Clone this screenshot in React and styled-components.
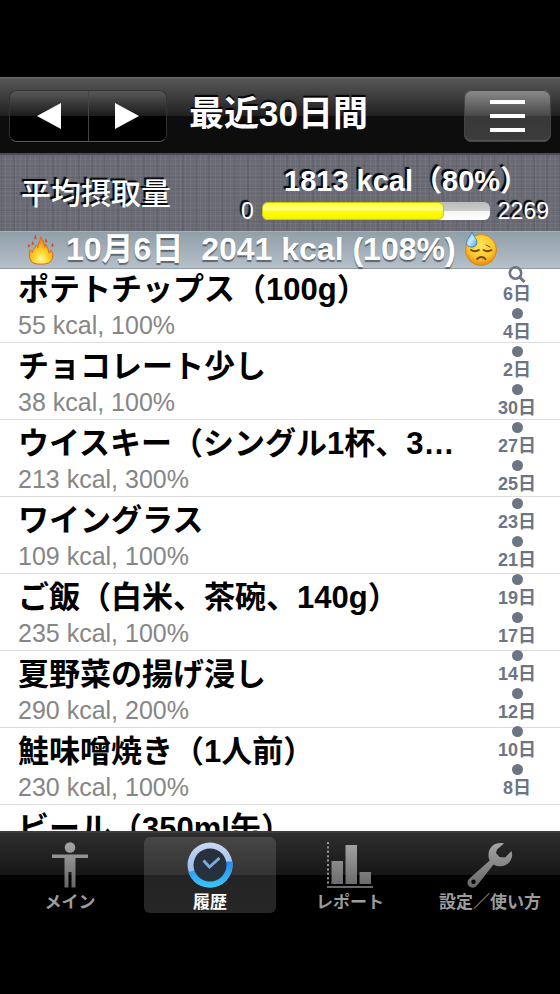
import React, { useState } from "react";
import styled, { createGlobalStyle } from "styled-components";

const GlobalStyle = createGlobalStyle`
  * {
    box-sizing: border-box;
  }

  body {
    margin: 0;
    background: #000;
    font-family: "Liberation Sans", "Noto Sans CJK JP", sans-serif;
  }

  button {
    font-family: inherit;
    padding: 0;
    border: none;
    cursor: pointer;
  }

  svg {
    flex-shrink: 0;
  }
`;

const Screen = styled.div`
  display: flex;
  flex-direction: column;
  height: 100vh;
  padding: 77px 0;
  background: #000;
  overflow: hidden;
`;

const Header = styled.header`
  display: flex;
  align-items: center;
  gap: 22px;
  flex-shrink: 0;
  height: 76px;
  padding: 0 9px;
  border-top: 1px solid #6c6c6c;
  background: linear-gradient(#585858, #212121 50%, #0e0e0e 50%, #0c0c0c);
`;

const Segment = styled.div`
  display: flex;
  width: 158px;
  height: 52px;
  border: 1px solid #333;
  border-bottom-color: #5a5a5a;
  border-radius: 8px;
  overflow: hidden;
`;

const SegmentButton = styled.button`
  display: flex;
  flex: 1;
  align-items: center;
  justify-content: center;
  background: linear-gradient(#585858, #1c1c1c 49%, #000 50%);

  & + & {
    border-left: 1px solid #444;
  }
`;

const Title = styled.h1`
  flex: 1;
  margin: 0;
  padding-bottom: 4px;
  color: #fff;
  font-size: 35px;
  font-weight: 700;
  line-height: 40px;
  text-shadow: 0 -2px 1px #000;
  white-space: nowrap;
`;

const MenuButton = styled.button`
  display: flex;
  flex-direction: column;
  align-items: center;
  justify-content: center;
  gap: 10px;
  width: 87px;
  height: 52px;
  border-radius: 8px;
  box-shadow: inset 0 0 0 1px #444, inset 0 -2px 0 #555;
  background: linear-gradient(#8c8c8c, #484848 50%, #383838 50%, #3c3c3c);
`;

const MenuLine = styled.span`
  width: 35px;
  height: 4px;
  background: #fff;
`;

const Summary = styled.section`
  display: flex;
  align-items: center;
  justify-content: space-between;
  flex-shrink: 0;
  height: 78px;
  padding: 2px 11px 0 21px;
  border-top: 2px solid #4c4d54;
  color: #fff;
  text-shadow: -2px -2px 1px #000;
  background:
    repeating-linear-gradient(90deg, rgba(255, 255, 255, 0.05) 0 1px, transparent 1px 5px),
    repeating-linear-gradient(90deg, rgba(0, 0, 0, 0.07) 0 2px, transparent 2px 13px),
    repeating-linear-gradient(rgba(255, 255, 255, 0.04) 0 1px, transparent 1px 4px),
    repeating-linear-gradient(rgba(0, 0, 0, 0.06) 0 1px, transparent 1px 11px),
    #696a74;
`;

const SummaryLabel = styled.h2`
  margin: 0;
  font-size: 30px;
  font-weight: 500;
  line-height: 40px;
`;

const SummaryValue = styled.div`
  display: flex;
  flex-direction: column;
`;

const SummaryTotal = styled.strong`
  padding-left: 43px;
  font-size: 29px;
  line-height: 34px;
  white-space: nowrap;
`;

const Gauge = styled.div`
  display: flex;
  align-items: center;
  gap: 8px;
  font-size: 23px;
  line-height: 26px;
`;

const GaugeTrack = styled.div`
  width: 228px;
  height: 18px;
  border-radius: 6px;
  background: linear-gradient(#bbb, #ccc 50%, #f6f6f6 50%, #fff);
  overflow: hidden;
`;

const GaugeFill = styled.div`
  height: 100%;
  border: 1px solid #c8c800;
  border-radius: 6px;
  background: linear-gradient(#ffff30, #ffff90 45%, #ffff00 50%, #f4f400);
`;

const DayHeader = styled.h2`
  position: relative;
  z-index: 1;
  display: flex;
  align-items: center;
  gap: 8px;
  flex-shrink: 0;
  height: 38px;
  margin: 0 0 -3px;
  padding: 0 24px 2px;
  border-top: 1px solid #a3b0b9;
  border-bottom: 1px solid #929da6;
  background: linear-gradient(#909fa9, #b6c0c9);
  color: #fff;
  font-size: 32px;
  line-height: 36px;
  text-shadow: 0 2px 1px rgba(0, 0, 0, 0.45);
  white-space: pre;
`;

const ListArea = styled.main`
  position: relative;
  flex: 1;
  min-height: 0;
  background: #fff;
`;

const FoodList = styled.ul`
  height: 100%;
  margin: 0;
  padding: 0;
  list-style: none;
  overflow: hidden;
`;

const FoodRow = styled.li`
  padding: 5px 90px 0 18px;
  border-bottom: 1px solid #dcdcdc;
`;

const FoodName = styled.h3`
  margin: 0;
  color: #000;
  font-size: 31px;
  font-weight: 700;
  line-height: 38px;
  white-space: nowrap;
`;

const FoodDetail = styled.p`
  margin: 0;
  color: #868686;
  font-size: 25px;
  line-height: 33px;
`;

/* リストの右端に重なる日付インデックス */
const DateIndex = styled.nav`
  position: absolute;
  top: 0;
  right: 0;
  z-index: 2;
  display: flex;
  flex-direction: column;
  align-items: center;
  width: 86px;
`;

const DateLink = styled.a`
  color: #6b7584;
  font-size: 18px;
  font-weight: 700;
  line-height: 20px;
  text-decoration: none;
`;

const Dot = styled.span`
  width: 11px;
  height: 11px;
  margin: 4px 0 3px;
  border-radius: 50%;
  background: #6b7584;
`;

const TabBar = styled.nav`
  display: grid;
  grid-template-columns: repeat(4, 1fr);
  flex-shrink: 0;
  height: 86px;
  padding: 4px 0;
  border-top: 2px solid #3c3c3c;
  background: linear-gradient(#2e2e2e, #161616 50%, #000 50%);
`;

const TabButton = styled.button`
  display: flex;
  flex-direction: column;
  align-items: center;
  gap: 5px;
  height: 76px;
  margin: 0 4px;
  padding-top: 5px;
  border-radius: 6px;
  background: ${({ $active }) =>
    $active ? "linear-gradient(#464646, #333 50%, #242424 50%, #262626)" : "none"};
  color: ${({ $active }) => ($active ? "#fff" : "#9c9c9c")};
  font-size: 17px;
  font-weight: 700;
  line-height: 20px;
  white-space: nowrap;
`;

const foods = [
  { name: "ポテトチップス（100g）", kcal: 55, rate: 100 },
  { name: "チョコレート少し", kcal: 38, rate: 100 },
  { name: "ウイスキー（シングル1杯、3…", kcal: 213, rate: 300 },
  { name: "ワイングラス", kcal: 109, rate: 100 },
  { name: "ご飯（白米、茶碗、140g）", kcal: 235, rate: 100 },
  { name: "夏野菜の揚げ浸し", kcal: 290, rate: 200 },
  { name: "鮭味噌焼き（1人前）", kcal: 230, rate: 100 },
  { name: "ビール（350ml缶）" },
];

const days = [6, 4, 2, 30, 27, 25, 23, 21, 19, 17, 14, 12, 10, 8];

const FireIcon = () => (
  <svg width="34" height="32" viewBox="0 0 28 34" aria-hidden="true">
    <defs>
      <radialGradient id="fire" cx="50%" cy="82%" r="65%">
        <stop offset="0" stopColor="#fff6a0" />
        <stop offset="0.5" stopColor="#ffd21f" />
        <stop offset="1" stopColor="#f08a1c" />
      </radialGradient>
    </defs>
    <path
      d="M6 32C2 30 .8 24 2 18c1.500.5 2 1.500 2.800 3C5.500 17 7.500 16.500 9 13c1 .5 1.500 1.500 1.500 2.500C11 11 13 9 14 4c2 3 3.500 7 4 11 .8-1 1-1.500 1-3 2 3 3 6 3.500 9.500 1.200-1 1.700-2 2-3.500C28 23 27 29 22 32c-4 1.500-12 1.500-16 0z"
      fill="url(#fire)"
      stroke="#dc6a1a"
      strokeWidth="1"
    />
    <path
      d="M8 2.500l.8 3-1.500 1zM19 6.500l1.500 3-1.500 0zM1 12l1 2-1.500 1zM26 11l1 3-1.500 0zM5 9l1 3-1.500 0z"
      fill="#cf4a20"
      stroke="#cf4a20"
      strokeWidth="0.8"
    />
  </svg>
);

const SweatFaceIcon = () => (
  <svg width="34" height="36" viewBox="0 0 34 36" aria-hidden="true">
    <defs>
      <radialGradient id="face" cx="50%" cy="35%" r="65%">
        <stop offset="0" stopColor="#ffe65a" />
        <stop offset="0.65" stopColor="#fcc42c" />
        <stop offset="1" stopColor="#e08a12" />
      </radialGradient>
      <linearGradient id="drop" x1="0" y1="0" x2="1" y2="1">
        <stop offset="0" stopColor="#4aa3dc" />
        <stop offset="0.5" stopColor="#c4ecfc" />
        <stop offset="1" stopColor="#3a9be0" />
      </linearGradient>
    </defs>
    <circle cx="17" cy="19" r="15.500" fill="url(#face)" stroke="#d98b18" />
    <g fill="none" stroke="#744514" strokeWidth="1.800" strokeLinecap="round">
      <path d="M7 19q4 2.500 8 0M19.500 19q4 2.500 8 0M13 28q4.500-4 8.500 0" />
      <path d="M8 16l4-2M26 16l-4-2" strokeWidth="1" />
    </g>
    <path
      d="M8 1C7 5 2.500 7.500 2.500 11.500c0 3 2 4.500 5 4.500s5.500-1.500 5.500-4.500C13 7.500 9 5 8 1z"
      fill="url(#drop)"
      stroke="#347fb4"
      strokeWidth="0.800"
    />
  </svg>
);

const SearchIcon = () => (
  <svg width="18" height="18" viewBox="0 0 18 18" aria-hidden="true">
    <circle cx="7.500" cy="7" r="5.700" fill="none" stroke="#6b7584" strokeWidth="2.600" />
    <path d="M11.500 11l5 5" stroke="#6b7584" strokeWidth="3" />
  </svg>
);

const GrayGradient = ({ id }) => (
  <defs>
    <linearGradient id={id} x1="0" y1="0" x2="0" y2="46" gradientUnits="userSpaceOnUse">
      <stop offset="0" stopColor="#a6a6a6" />
      <stop offset="1" stopColor="#666" />
    </linearGradient>
  </defs>
);

const PersonIcon = () => (
  <svg width="46" height="46" viewBox="0 0 46 46" aria-hidden="true">
    <GrayGradient id="person" />
    <g fill="url(#person)">
      <circle cx="23" cy="5.500" r="5.300" />
      <path d="M5 12.500h36v3.500H28.500v29.500h-4V30h-3v15.500h-4V16H5z" />
    </g>
  </svg>
);

const ClockIcon = () => (
  <svg width="46" height="46" viewBox="0 0 46 46" aria-hidden="true">
    <defs>
      <linearGradient id="ringTop" x1="0" y1="0" x2="0" y2="1">
        <stop offset="0" stopColor="#cbd8f4" />
        <stop offset="1" stopColor="#7fabea" />
      </linearGradient>
      <linearGradient id="ringBottom" x1="0" y1="0" x2="0" y2="1">
        <stop offset="0" stopColor="#2b87ee" />
        <stop offset="1" stopColor="#38c8fa" />
      </linearGradient>
    </defs>
    <circle cx="23" cy="23" r="22.500" fill="url(#ringTop)" />
    <path d="M1.500 30C12 28 28 19 45.500 19.500c1.500 14-9 26-22.500 26C12 45.500 4 39 1.500 30z" fill="url(#ringBottom)" />
    <circle cx="23" cy="23" r="16.500" fill="#26313d" />
    <path d="M16.500 18.500l6 6.500 10-9" fill="none" stroke="#7eaade" strokeWidth="3" />
  </svg>
);

const ChartIcon = () => (
  <svg width="46" height="46" viewBox="0 0 46 46" aria-hidden="true">
    <GrayGradient id="chart" />
    <g fill="url(#chart)">
      <path d="M4.500 19h11.500v23H4.500zM18.500 3h11.500v39H18.500zM32.500 30h11.500v12H32.500zM0 44h46v2H0z" />
    </g>
    <path d="M1 0v43" stroke="#999" strokeWidth="2" strokeDasharray="2 2.400" />
  </svg>
);

const WrenchIcon = () => (
  <svg width="46" height="46" viewBox="0 0 46 46" aria-hidden="true">
    <GrayGradient id="wrench" />
    <path
      fillRule="evenodd"
      fill="url(#wrench)"
      d="M37 1.500C29-.5 21.500 4.500 21.500 13c0 2.500.5 4 1.200 5.500L3 36c-3.500 3-3 6.500-1 8.300 2.500 2.200 6 1.700 8-.8L26.500 22.500c6 3.500 13.500 2 17-4 2-3.500 2-6 1-9.500L38 15.500l-5.500-.5L29 11l1-3.500zM6.500 37.500a2.200 2.200 0 1 0 0 4.400 2.200 2.200 0 1 0 0-4.400z"
    />
  </svg>
);

const tabs = [
  { id: "main", label: "メイン", Icon: PersonIcon },
  { id: "history", label: "履歴", Icon: ClockIcon },
  { id: "report", label: "レポート", Icon: ChartIcon },
  { id: "settings", label: "設定／使い方", Icon: WrenchIcon },
];

const App = () => {
  const [activeTab, setActiveTab] = useState("history");
  const rate = 80;

  return (
    <>
      <GlobalStyle />
      <Screen>
        <Header>
          <Segment>
            <SegmentButton aria-label="前の期間">
              <svg width="24" height="26" viewBox="0 0 24 26">
                <path d="M0 13L24 0v26z" fill="#fff" />
              </svg>
            </SegmentButton>
            <SegmentButton aria-label="次の期間">
              <svg width="24" height="26" viewBox="0 0 24 26">
                <path d="M24 13L0 0v26z" fill="#fff" />
              </svg>
            </SegmentButton>
          </Segment>
          <Title>最近30日間</Title>
          <MenuButton aria-label="メニュー">
            <MenuLine />
            <MenuLine />
            <MenuLine />
          </MenuButton>
        </Header>

        <Summary>
          <SummaryLabel>平均摂取量</SummaryLabel>
          <SummaryValue>
            <SummaryTotal>1813 kcal（{rate}%）</SummaryTotal>
            <Gauge>
              <span>0</span>
              <GaugeTrack
                role="progressbar"
                aria-label="平均摂取量"
                aria-valuenow={1813}
                aria-valuemax={2269}
              >
                <GaugeFill style={{ width: `${rate}%` }} />
              </GaugeTrack>
              <span>2269</span>
            </Gauge>
          </SummaryValue>
        </Summary>

        <DayHeader>
          <FireIcon />
          <span>10月6日{"  "}2041 kcal (108%)</span>
          <SweatFaceIcon />
        </DayHeader>

        <ListArea>
          <FoodList>
            {foods.map((food) => (
              <FoodRow key={food.name}>
                <FoodName>{food.name}</FoodName>
                {food.kcal && (
                  <FoodDetail>
                    {food.kcal} kcal, {food.rate}%
                  </FoodDetail>
                )}
              </FoodRow>
            ))}
          </FoodList>
          <DateIndex aria-label="日付">
            <SearchIcon />
            {days.map((day, index) => (
              <React.Fragment key={day}>
                <DateLink href={`#day-${day}`}>{day}日</DateLink>
                {index < days.length - 1 && <Dot />}
              </React.Fragment>
            ))}
          </DateIndex>
        </ListArea>

        <TabBar>
          {tabs.map(({ id, label, Icon }) => (
            <TabButton
              key={id}
              $active={activeTab === id}
              onClick={() => setActiveTab(id)}
            >
              <Icon />
              {label}
            </TabButton>
          ))}
        </TabBar>
      </Screen>
    </>
  );
};

export default App;
